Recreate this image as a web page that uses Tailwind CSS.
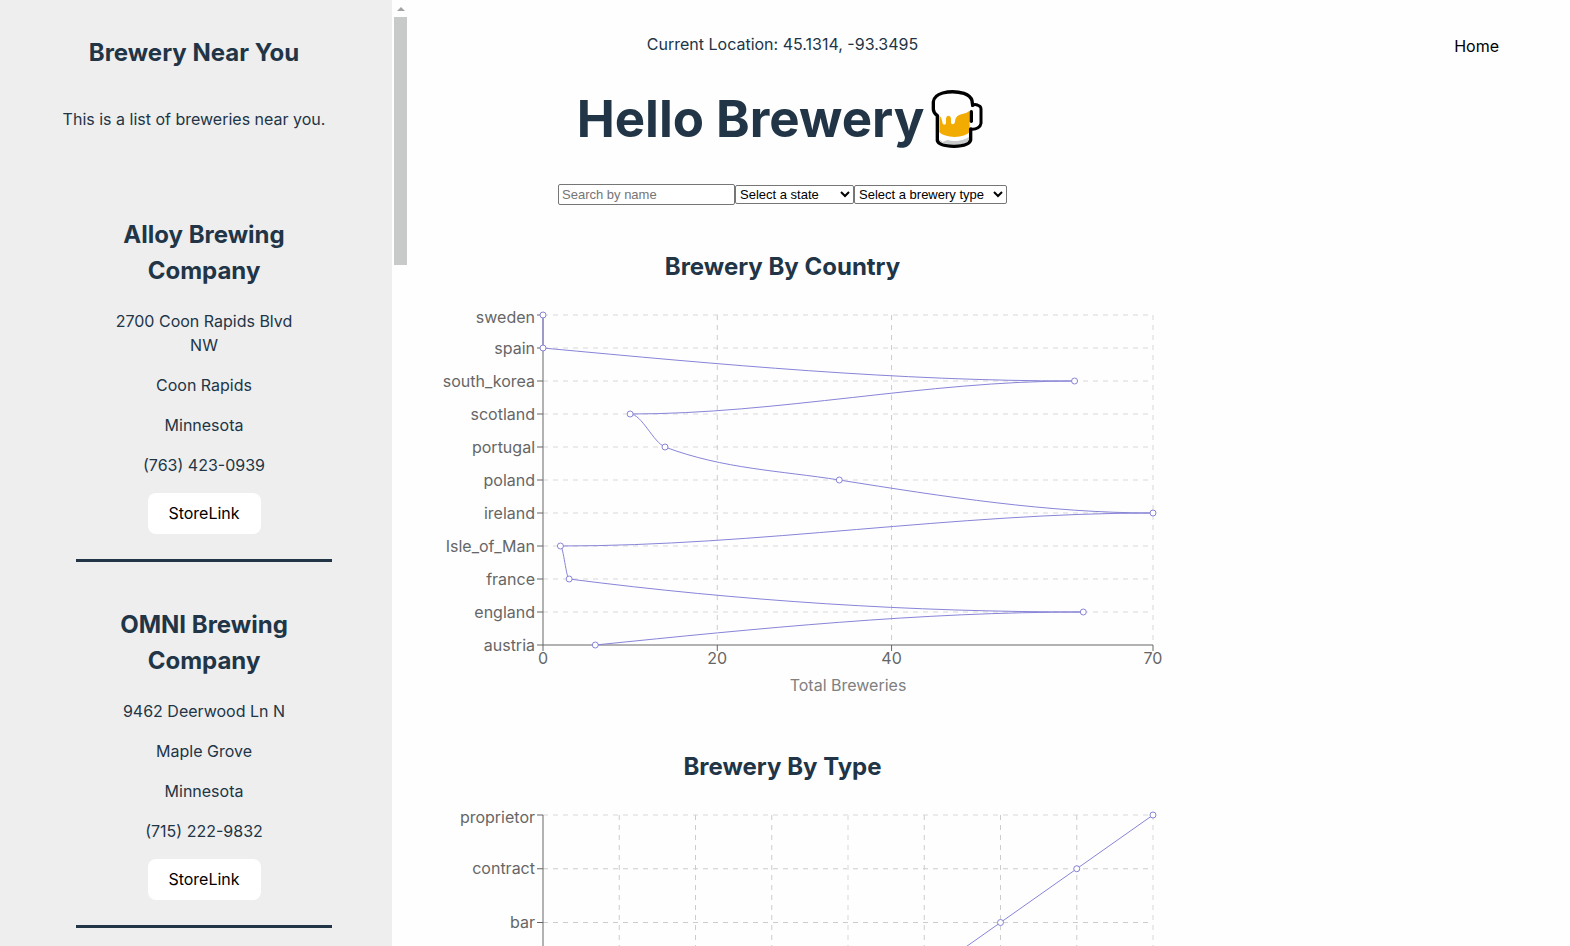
<!DOCTYPE html>
<html lang="en">
<head>
<meta charset="utf-8">
<meta name="viewport" content="width=device-width, initial-scale=1">
<title>Hello Brewery</title>
<script src="https://cdn.jsdelivr.net/npm/@tailwindcss/browser@4"></script>
</head>
<body class="flex h-screen overflow-hidden bg-[#fefefe] font-['Inter',sans-serif] text-base text-[#213547]">

<aside class="w-[392px] shrink-0 overflow-hidden bg-[#eeeeee] text-center">
  <header class="pt-[35px] pr-1">
    <h2 class="text-2xl leading-9 font-bold">Brewery Near You</h2>
    <p class="mt-9">This is a list of breweries near you.</p>
  </header>
  <ul class="mt-[86px] flex flex-col gap-[45px] pr-[60px] pl-[76px]">
    <li class="flex flex-col items-center gap-4 border-b-3 border-[#213547] px-8 pb-[25px]">
      <h2 class="mb-1 text-2xl leading-9 font-bold">Alloy Brewing Company</h2>
      <p>2700 Coon Rapids Blvd NW</p>
      <p>Coon Rapids</p>
      <p>Minnesota</p>
      <p>(763) 423-0939</p>
      <button class="h-[41px] w-[113px] rounded-lg bg-white pb-0.5 text-black">StoreLink</button>
    </li>
    <li class="flex flex-col items-center gap-4 border-b-3 border-[#213547] px-8 pb-[25px]">
      <h2 class="mb-1 text-2xl leading-9 font-bold">OMNI Brewing Company</h2>
      <p>9462 Deerwood Ln N</p>
      <p>Maple Grove</p>
      <p>Minnesota</p>
      <p>(715) 222-9832</p>
      <button class="h-[41px] w-[113px] rounded-lg bg-white pb-0.5 text-black">StoreLink</button>
    </li>
  </ul>
</aside>

<!-- sidebar scrollbar -->
<div class="flex w-[15px] shrink-0 flex-col items-end" aria-hidden="true">
  <div class="flex h-[17px] w-[13px] items-center justify-center">
    <svg width="8" height="4" viewBox="0 0 8 4"><path d="M0 4 L4 0 L8 4Z" fill="#a3a3a3"/></svg>
  </div>
  <div class="h-[248px] w-[13px] bg-[#c8caca]"></div>
</div>

<main class="min-w-0 flex-1 overflow-y-clip text-center">
  <p class="mt-8">Current Location: 45.1314, -93.3495</p>
  <h1 class="mt-8 flex h-[62px] items-center justify-center gap-1.5 pr-1 text-[51px] leading-none font-bold">
    <span class="pb-0.5">Hello Brewery</span>
    <svg class="shrink-0" width="54" height="62" viewBox="30 24 162 186" role="img" aria-label="beer mug" fill="none" stroke-linecap="round" stroke-linejoin="round">
      <path d="M150 76 L158 76 Q164 72 172 75 L180 79 Q183 82 183 88 L183 130 Q182 138 174 143 Q164 149 151 147" stroke="#000" stroke-width="9" fill="#fefefe"/>
      <path d="M52 107 L52 182 Q56 198 102 199 Q148 198 152 182 L154 72 Q150 42 112 36 Q66 31 46 50 Q38 60 42 84 Q42 94 52 107Z" fill="#fefefe"/>
      <path d="M57 166 Q76 182 102 182 Q136 180 148 166 L148 180 Q142 193 102 194 Q62 192 57 180Z" fill="#c8caca"/>
      <path d="M57 160 Q76 176 102 177 Q134 176 148 160 L148 170 Q132 182 102 183 Q90 182 82 180 L68 186 L57 178Z" fill="#fefefe"/>
      <path d="M58 106 Q66 114 67 126 L67 128 Q68 134 74 134 Q78 133 78 128 L78 116 Q79 107 86 107 Q93 108 93 116 L93 128 Q94 133 99 133 Q104 132 105 126 L106 118 Q110 106 124 103 Q140 100 149 92 L149 156 Q136 170 104 171 Q72 170 58 157Z" fill="#f2ab00"/>
      <path d="M152 147 L152 180 Q148 198 102 199 Q56 198 52 182 L52 107 Q40 98 40 88 L40 66 Q42 46 68 39 Q100 31 132 40 Q152 47 156 62 L158 76" stroke="#000" stroke-width="10"/>
      <path d="M154 95 L154 124" stroke="#000" stroke-width="10"/>
    </svg>
  </h1>
  <form class="mt-[34px] flex items-center justify-center font-['Liberation_Sans',Arial,sans-serif] text-[13px]">
    <input type="text" aria-label="Search by name" placeholder="Search by name" class="h-[21px] w-[177px] rounded-[2px] border border-[#767676] bg-white px-[3px] placeholder:text-[#757575]">
    <select aria-label="State" class="h-[19px] w-[119px] rounded-[2px] border border-[#767676] bg-white text-black">
      <option>Select a state</option>
    </select>
    <select aria-label="Brewery type" class="h-[19px] w-[153px] rounded-[2px] border border-[#767676] bg-white text-black">
      <option>Select a brewery type</option>
    </select>
  </form>

  <section class="mt-11">
    <h2 class="text-2xl leading-9 font-bold">Brewery By Country</h2>
    <svg id="by-country" class="mx-auto mt-[25px] block h-auto max-w-full overflow-visible" width="751" height="400" viewBox="0 0 751 400" role="img" aria-label="Total breweries by country"></svg>
  </section>
  <section class="mt-[39px]">
    <h2 class="text-2xl leading-9 font-bold">Brewery By Type</h2>
    <svg id="by-type" class="mx-auto mt-[25px] block h-auto max-w-full overflow-visible" width="751" height="500" viewBox="0 0 751 500" role="img" aria-label="Total breweries by type"></svg>
  </section>
</main>

<nav class="w-[412px] shrink-0 pt-[34px] pr-[71px] text-right">
  <a href="#" class="text-black">Home</a>
</nav>

<script>
const LEFT = 136, RIGHT = 746, TOP = 5;

// Cubic interpolation that is monotone in x; turning points get a flat tangent.
function curve(pts) {
  const n = pts.length;
  const slope = i => (pts[i + 1][1] - pts[i][1]) / (pts[i + 1][0] - pts[i][0]);
  const tan = new Array(n).fill(0);
  for (let i = 1; i < n - 1; i++) {
    const h0 = pts[i][0] - pts[i - 1][0], h1 = pts[i + 1][0] - pts[i][0];
    if (!h0 || !h1) continue;
    const s0 = slope(i - 1), s1 = slope(i), p = (s0 * h1 + s1 * h0) / (h0 + h1);
    tan[i] = (Math.sign(s0) + Math.sign(s1)) * Math.min(Math.abs(s0), Math.abs(s1), 0.5 * Math.abs(p)) || 0;
  }
  tan[0] = (3 * slope(0) - tan[1]) / 2;
  tan[n - 1] = (3 * slope(n - 2) - tan[n - 2]) / 2;
  let d = `M${pts[0]}`;
  for (let i = 0; i < n - 1; i++) {
    const [x0, y0] = pts[i], [x1, y1] = pts[i + 1], dx = (x1 - x0) / 3;
    if (!dx) { d += `L${x1},${y1}`; continue; }
    // a point followed by a vertical segment is treated as an end point
    const t0 = tan[i];
    const t1 = i + 2 < n && pts[i + 2][0] === x1 ? (3 * (y1 - y0) / (x1 - x0) - t0) / 2 : tan[i + 1];
    d += `C${x0 + dx},${y0 + dx * t0} ${x1 - dx},${y1 - dx * t1} ${x1},${y1}`;
  }
  return d;
}

const line = (x1, y1, x2, y2, attrs) => `<line x1="${x1}" y1="${y1}" x2="${x2}" y2="${y2}" ${attrs}/>`;

// Grid lines that fall between two pixels are spread over both, in a lighter grey.
const grid = at => 'stroke-dasharray="5 5" ' + (Number.isInteger(at) ? 'stroke="#ebebeb" stroke-width="2"' : 'stroke="#ccc"');

function draw(id, rows, step, bottom, max, ticks, title) {
  const X = v => LEFT + (RIGHT - LEFT) * v / max, Y = i => TOP + step * i;
  const axis = 'stroke="#666"';
  let s = '';
  rows.forEach((r, i) => { if (Y(i) < bottom) s += line(LEFT, Y(i), RIGHT, Y(i), grid(Y(i))); });
  ticks.forEach(t => { if (t) s += line(X(t), TOP, X(t), bottom, grid(X(t))); });
  s += line(LEFT, TOP, LEFT, bottom, axis) + line(LEFT, bottom, RIGHT, bottom, axis);
  rows.forEach((r, i) => s += line(LEFT - 6, Y(i), LEFT, Y(i), axis) + `<text x="${LEFT - 8}" y="${Math.floor(Y(i)) + (i ? 6 : 8)}" text-anchor="end">${r[0]}</text>`);
  ticks.forEach(t => s += line(X(t), bottom, X(t), bottom + 6, axis) + `<text x="${X(t)}" y="${bottom + 19}" text-anchor="middle">${t}</text>`);
  s += `<text x="${(LEFT + RIGHT) / 2}" y="${bottom + 46}" text-anchor="middle" fill="#808080">${title}</text>`;
  const pts = rows.map((r, i) => [X(r[1]), Y(i)]).reverse();
  s += `<path d="${curve(pts)}" fill="none" stroke="#8884d8"/>`;
  pts.forEach(p => s += `<circle cx="${p[0]}" cy="${p[1]}" r="3" fill="#fff" stroke="#8884d8"/>`);
  document.getElementById(id).innerHTML = `<g font-size="16" fill="#666">${s}</g>`;
}

draw('by-country', [['sweden', 0], ['spain', 0], ['south_korea', 61], ['scotland', 10], ['portugal', 14], ['poland', 34],
  ['ireland', 70], ['Isle_of_Man', 2], ['france', 3], ['england', 62], ['austria', 6]], 33, 335, 70, [0, 20, 40, 70], 'Total Breweries');
draw('by-type', [['proprietor', 8], ['contract', 7], ['bar', 6], ['planning', 5], ['large', 4], ['brewpub', 3], ['regional', 2], ['nano', 1], ['micro', 0]],
  53.75, 435, 8, [0, 1, 2, 3, 4, 5, 6, 7, 8], 'Total Breweries');
</script>
</body>
</html>
